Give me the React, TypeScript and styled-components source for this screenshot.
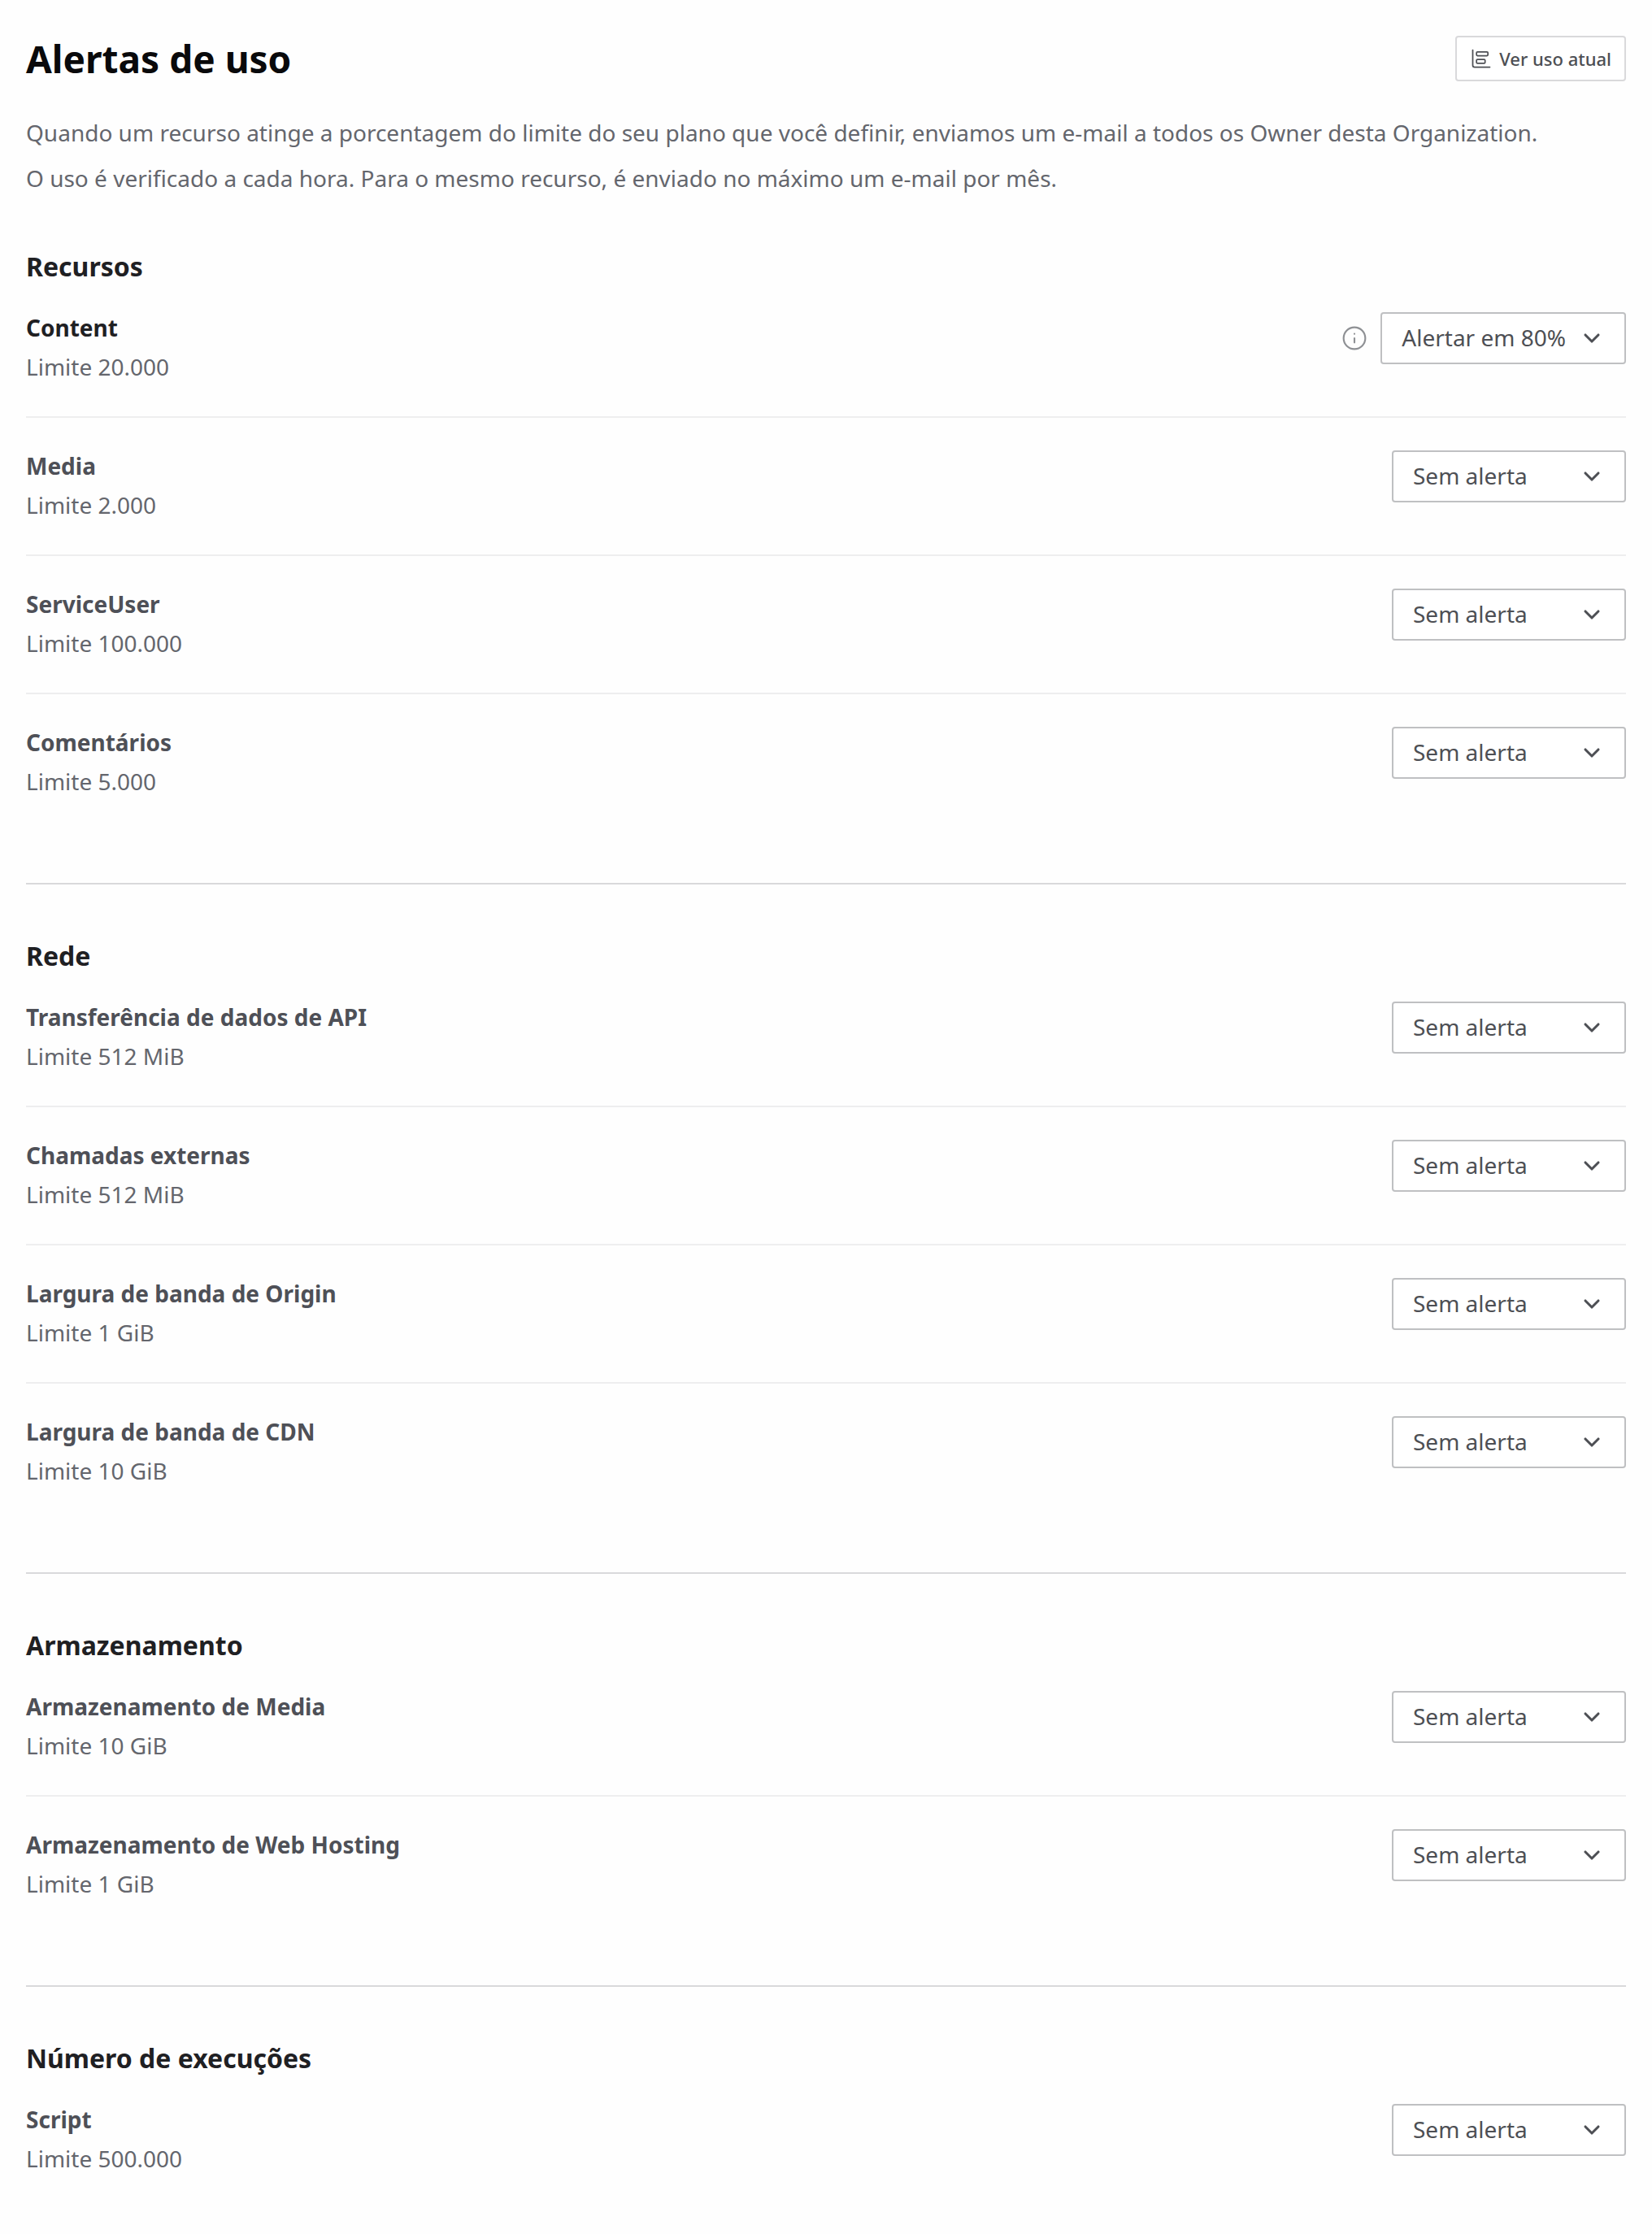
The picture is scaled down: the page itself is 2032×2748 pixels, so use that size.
import React from "react";
import styled, { createGlobalStyle } from "styled-components";
import { ChartBarBig, ChevronDown, Info } from "lucide-react";

const GlobalStyle = createGlobalStyle`
  *, *::before, *::after {
    box-sizing: border-box;
  }
  body {
    margin: 0;
    background: #fefefe;
    color: #4d4f54;
    font-family: "Noto Sans", sans-serif;
    font-size: 28px;
    line-height: 46px;
  }
`;

const Page = styled.main`
  padding: 40px 32px 32px;
`;

const Header = styled.header`
  display: flex;
  align-items: center;
  justify-content: space-between;
  gap: 32px;
`;

const Title = styled.h1`
  margin: 0;
  color: #09090b;
  font-size: 46px;
  font-weight: 700;
  line-height: 64px;
`;

const UsageButton = styled.button`
  display: inline-flex;
  align-items: center;
  gap: 8px;
  height: 56px;
  padding: 0 16px;
  border: 2px solid #d9d9db;
  border-radius: 4px;
  background: #fff;
  color: #4d4f54;
  font: 500 22px/32px "Noto Sans", sans-serif;
  white-space: nowrap;
  cursor: pointer;
`;

const Intro = styled.p`
  margin: 31px 0 57px;
  color: #64666d;
  line-height: 56px;
`;

const IntroLine = styled.span`
  display: block;
`;

const Section = styled.section`
  & + & {
    margin-top: 64px;
    padding-top: 64px;
    border-top: 2px solid #d9d9db;
  }
`;

const SectionTitle = styled.h2`
  margin: 0 0 28px;
  color: #1f2023;
  font-size: 32px;
  font-weight: 700;
  line-height: 48px;
`;

const ResourceList = styled.ul`
  margin: 0;
  padding: 0;
  list-style: none;
`;

const ResourceRow = styled.li`
  display: flex;
  align-items: flex-start;
  justify-content: space-between;
  gap: 32px;
  padding-bottom: 38px;

  & + & {
    padding-top: 36px;
    border-top: 2px solid #eeeeef;
  }
`;

const ResourceText = styled.div`
  display: flex;
  flex-direction: column;
  gap: 2px;
`;

const ResourceName = styled.label<{ $active: boolean }>`
  color: ${({ $active }) => ($active ? "#1f2023" : "#4e5057")};
  font-weight: 700;
`;

const ResourceLimit = styled.span`
  color: #64666d;
`;

const Controls = styled.div`
  display: flex;
  align-items: center;
  gap: 16px;
  min-height: 72px;
`;

const InfoButton = styled.button`
  display: flex;
  padding: 0;
  border: 0;
  background: none;
  color: #8e9094;
  cursor: pointer;
`;

const SelectBox = styled.div`
  display: grid;
  align-items: center;

  > * {
    grid-area: 1 / 1;
  }

  > svg {
    justify-self: end;
    margin-right: 26px;
    color: #4d4f54;
    pointer-events: none;
  }
`;

const Select = styled.select`
  appearance: none;
  field-sizing: content;
  min-width: 288px;
  height: 64px;
  padding: 0 72px 2px 24px;
  border: 2px solid #bfc0c2;
  border-radius: 4px;
  background: #fff;
  color: #4d4f54;
  font: 400 28px/40px "Noto Sans", sans-serif;
  cursor: pointer;
`;

type Resource = { id: string; name: string; limit: string; alert?: string };
type Group = { title: string; resources: Resource[] };

const groups: Group[] = [
  {
    title: "Recursos",
    resources: [
      { id: "content", name: "Content", limit: "20.000", alert: "80" },
      { id: "media", name: "Media", limit: "2.000" },
      { id: "service-user", name: "ServiceUser", limit: "100.000" },
      { id: "comments", name: "Comentários", limit: "5.000" },
    ],
  },
  {
    title: "Rede",
    resources: [
      { id: "api-transfer", name: "Transferência de dados de API", limit: "512 MiB" },
      { id: "external-calls", name: "Chamadas externas", limit: "512 MiB" },
      { id: "origin-bandwidth", name: "Largura de banda de Origin", limit: "1 GiB" },
      { id: "cdn-bandwidth", name: "Largura de banda de CDN", limit: "10 GiB" },
    ],
  },
  {
    title: "Armazenamento",
    resources: [
      { id: "media-storage", name: "Armazenamento de Media", limit: "10 GiB" },
      { id: "hosting-storage", name: "Armazenamento de Web Hosting", limit: "1 GiB" },
    ],
  },
  {
    title: "Número de execuções",
    resources: [{ id: "script", name: "Script", limit: "500.000" }],
  },
];

function AlertRow({ id, name, limit, alert = "none" }: Resource) {
  const [value, setValue] = React.useState(alert);
  const active = value !== "none";

  return (
    <ResourceRow>
      <ResourceText>
        <ResourceName htmlFor={id} $active={active}>
          {name}
        </ResourceName>
        <ResourceLimit>Limite {limit}</ResourceLimit>
      </ResourceText>
      <Controls>
        {active && (
          <InfoButton type="button" aria-label="Informações">
            <Info size={32} strokeWidth={1.6} />
          </InfoButton>
        )}
        <SelectBox>
          <Select id={id} value={value} onChange={(event) => setValue(event.target.value)}>
            <option value="none">Sem alerta</option>
            <option value="80">Alertar em 80%</option>
          </Select>
          <ChevronDown size={32} strokeWidth={2.3} />
        </SelectBox>
      </Controls>
    </ResourceRow>
  );
}

export default function App() {
  return (
    <>
      <GlobalStyle />
      <Page>
        <Header>
          <Title>Alertas de uso</Title>
          <UsageButton type="button">
            <ChartBarBig size={28} strokeWidth={1.5} />
            Ver uso atual
          </UsageButton>
        </Header>
        <Intro>
          <IntroLine>
            Quando um recurso atinge a porcentagem do limite do seu plano que você definir, enviamos um e-mail a todos os
            Owner desta Organization.
          </IntroLine>
          <IntroLine>
            O uso é verificado a cada hora. Para o mesmo recurso, é enviado no máximo um e-mail por mês.
          </IntroLine>
        </Intro>
        {groups.map((group) => (
          <Section key={group.title}>
            <SectionTitle>{group.title}</SectionTitle>
            <ResourceList>
              {group.resources.map((resource) => (
                <AlertRow key={resource.id} {...resource} />
              ))}
            </ResourceList>
          </Section>
        ))}
      </Page>
    </>
  );
}
